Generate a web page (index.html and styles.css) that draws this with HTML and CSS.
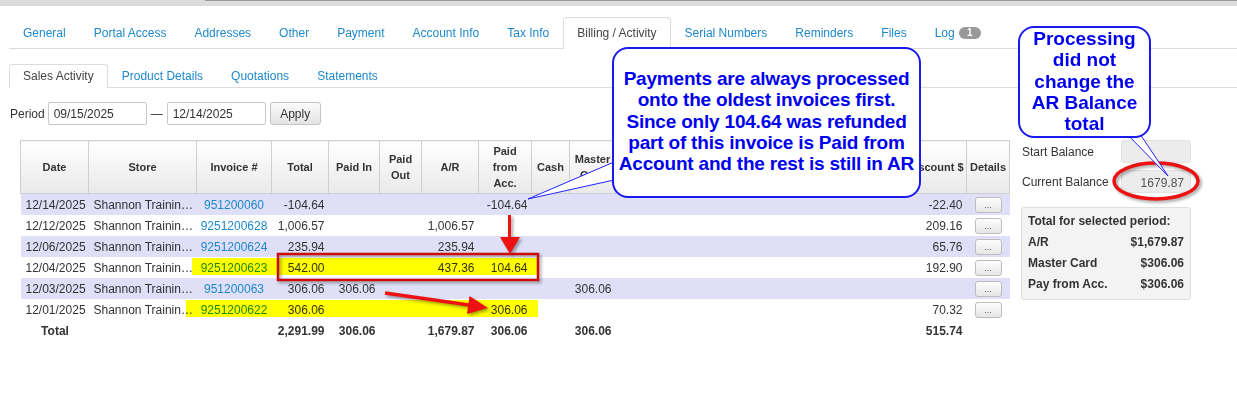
FILE: index.html
```html
<!DOCTYPE html>
<html lang="en">
<head>
    <meta charset="UTF-8">
    <title>Billing / Activity</title>
    <link rel="stylesheet" href="styles.css">
</head>
<body>
<div class="page">
    <div class="topbar"><div class="topbar-line"></div></div>

    <!-- Main customer tabs -->
    <ul class="tabs">
        <li><a href="#">General</a></li>
        <li><a href="#">Portal Access</a></li>
        <li><a href="#">Addresses</a></li>
        <li><a href="#">Other</a></li>
        <li><a href="#">Payment</a></li>
        <li><a href="#">Account Info</a></li>
        <li><a href="#">Tax Info</a></li>
        <li class="active"><a href="#">Billing / Activity</a></li>
        <li><a href="#">Serial Numbers</a></li>
        <li><a href="#">Reminders</a></li>
        <li><a href="#">Files</a></li>
        <li><a href="#">Log <span class="badge">1</span></a></li>
    </ul>

    <ul class="tabs subtabs">
        <li class="active"><a href="#">Sales Activity</a></li>
        <li><a href="#">Product Details</a></li>
        <li><a href="#">Quotations</a></li>
        <li><a href="#">Statements</a></li>
    </ul>

    <div class="period">
        <label>Period</label>
        <input type="text" value="09/15/2025">
        <span class="dash">&mdash;</span>
        <input type="text" value="12/14/2025">
        <button class="btn">Apply</button>
    </div>

    <div class="content">
        <table class="activity">
            <colgroup>
                <col style="width:68px"><col style="width:108px"><col style="width:75px"><col style="width:57px">
                <col style="width:51px"><col style="width:42px"><col style="width:57px"><col style="width:53px">
                <col style="width:38px"><col style="width:46px"><col style="width:58px"><col style="width:58px">
                <col style="width:58px"><col style="width:58px"><col style="width:57px"><col style="width:62px">
                <col style="width:43px">
            </colgroup>
            <thead>
                <tr>
                    <th>Date</th><th>Store</th><th>Invoice #</th><th>Total</th><th>Paid In</th><th>Paid Out</th>
                    <th>A/R</th><th>Paid from Acc.</th><th>Cash</th><th>Master Card</th><th></th><th></th>
                    <th></th><th></th><th></th><th>Discount $</th><th>Details</th>
                </tr>
            </thead>
            <tbody>
                <tr>
                    <td>12/14/2025</td><td class="store">Shannon Training Store</td><td class="inv"><a href="#">951200060</a></td>
                    <td class="num">-104.64</td><td></td><td></td><td></td><td class="num">-104.64</td><td></td><td></td>
                    <td></td><td></td><td></td><td></td><td></td><td class="num">-22.40</td><td class="det"><button>...</button></td>
                </tr>
                <tr>
                    <td>12/12/2025</td><td class="store">Shannon Training Store</td><td class="inv"><a href="#">9251200628</a></td>
                    <td class="num">1,006.57</td><td></td><td></td><td class="num">1,006.57</td><td></td><td></td><td></td>
                    <td></td><td></td><td></td><td></td><td></td><td class="num">209.16</td><td class="det"><button>...</button></td>
                </tr>
                <tr>
                    <td>12/06/2025</td><td class="store">Shannon Training Store</td><td class="inv"><a href="#">9251200624</a></td>
                    <td class="num">235.94</td><td></td><td></td><td class="num">235.94</td><td></td><td></td><td></td>
                    <td></td><td></td><td></td><td></td><td></td><td class="num">65.76</td><td class="det"><button>...</button></td>
                </tr>
                <tr>
                    <td>12/04/2025</td><td class="store">Shannon Training Store</td><td class="inv"><a href="#">9251200623</a></td>
                    <td class="num">542.00</td><td></td><td></td><td class="num">437.36</td><td class="num">104.64</td><td></td><td></td>
                    <td></td><td></td><td></td><td></td><td></td><td class="num">192.90</td><td class="det"><button>...</button></td>
                </tr>
                <tr>
                    <td>12/03/2025</td><td class="store">Shannon Training Store</td><td class="inv"><a href="#">951200063</a></td>
                    <td class="num">306.06</td><td class="num">306.06</td><td></td><td></td><td></td><td></td><td class="num">306.06</td>
                    <td></td><td></td><td></td><td></td><td></td><td></td><td class="det"><button>...</button></td>
                </tr>
                <tr>
                    <td>12/01/2025</td><td class="store">Shannon Training Store</td><td class="inv"><a href="#">9251200622</a></td>
                    <td class="num">306.06</td><td></td><td></td><td></td><td class="num">306.06</td><td></td><td></td>
                    <td></td><td></td><td></td><td></td><td></td><td class="num">70.32</td><td class="det"><button>...</button></td>
                </tr>
            </tbody>
            <tfoot>
                <tr>
                    <td class="label">Total</td><td></td><td></td><td class="num">2,291.99</td><td class="num">306.06</td><td></td>
                    <td class="num">1,679.87</td><td class="num">306.06</td><td></td><td class="num">306.06</td>
                    <td></td><td></td><td></td><td></td><td></td><td class="num">515.74</td><td></td>
                </tr>
            </tfoot>
        </table>

        <aside class="balance">
            <div class="balance-row">
                <span>Start Balance</span>
                <div class="field"></div>
            </div>
            <div class="balance-row">
                <span>Current Balance</span>
                <div class="field">1679.87</div>
            </div>
            <div class="summary">
                <div class="summary-title">Total for selected period:</div>
                <div class="summary-row"><span>A/R</span><span>$1,679.87</span></div>
                <div class="summary-row"><span>Master Card</span><span>$306.06</span></div>
                <div class="summary-row"><span>Pay from Acc.</span><span>$306.06</span></div>
            </div>
        </aside>
    </div>

    <!-- highlighter marks (multiplied over the table) -->
    <svg class="overlay highlight" width="1237" height="397">
        <rect x="192" y="258" width="346" height="17" fill="#ffff00"/>
        <rect x="186" y="300" width="352" height="17" fill="#ffff00"/>
    </svg>

    <!-- annotation shapes -->
    <svg class="overlay marks" width="1237" height="397">
        <g class="red">
            <rect x="278" y="254" width="260" height="26" fill="none" stroke="#cc0a0a" stroke-width="2.5"/>
            <line x1="509.5" y1="215" x2="509.5" y2="239" stroke="#ee1111" stroke-width="3"/>
            <polygon points="500,237 520,237 510,254" fill="#ee1111"/>
            <line x1="385" y1="293" x2="469" y2="305" stroke="#ee1111" stroke-width="3.5"/>
            <polygon points="467,314 469.5,296 488,308" fill="#ee1111"/>
            <ellipse cx="1156" cy="181" rx="42" ry="18" fill="none" stroke="#ee1111" stroke-width="3.5"/>
        </g>
        <polygon points="614,162 614,180 528,199" fill="#fff" stroke="#2222ff" stroke-width="1"/>
        <polygon points="1127,134 1140,134 1168,176" fill="#fff" stroke="#2222ff" stroke-width="1"/>
    </svg>

    <div class="callout callout-main">
        Payments are always processed<br>
        onto the oldest invoices first.<br>
        Since only 104.64 was refunded<br>
        part of this invoice is Paid from<br>
        Account and the rest is still in AR
    </div>
    <div class="callout callout-side">
        Processing<br>did not<br>change the<br>AR Balance<br>total
    </div>
</div>
</body>
</html>
```

FILE: styles.css
```css
/* page */
body {
    margin: 0;
    font-family: "Liberation Sans", Arial, sans-serif;
    font-size: 12px;
    color: #333;
    background: #fff;
}

.page {
    position: relative;
    width: 1237px;
    height: 397px;
    overflow: hidden;
}

.topbar {
    height: 6px;
    background: #dcdcdc;
}

.topbar-line {
    margin-left: 205px;
    height: 1px;
    background: #9a9a9a;
}

/* tabs */
.tabs {
    display: flex;
    list-style: none;
    margin: 11px 0 0 9px;
    padding: 0;
    border-bottom: 1px solid #dcdcdc;
}

.tabs li {
    margin-bottom: -1px;
}

.tabs a {
    display: block;
    padding: 0 13px;
    line-height: 30px;
    border: 1px solid transparent;
    border-bottom: 0;
    border-radius: 4px 4px 0 0;
    color: #1e88cc;
    text-decoration: none;
}

.tabs li.active a {
    color: #444;
    background: #fff;
    border-color: #dcdcdc;
    padding-bottom: 1px;
}

.badge {
    display: inline-block;
    margin-left: 1px;
    padding: 0 8px;
    line-height: 12px;
    border-radius: 6px;
    background: #999;
    color: #fff;
    font-size: 10px;
    font-weight: bold;
    vertical-align: 1px;
}

.subtabs {
    margin-top: 15px;
    margin-left: 9px;
}

.subtabs a {
    line-height: 22px;
    padding: 0 13px;
}

/* period filter */
.period {
    display: flex;
    align-items: center;
    margin: 14px 0 0 10px;
    height: 23px;
}

.period label {
    margin-right: 3px;
}

.period input {
    box-sizing: border-box;
    width: 99px;
    height: 23px;
    padding: 0 5px;
    border: 1px solid #c8c8c8;
    border-radius: 2px;
    font-family: inherit;
    font-size: 12px;
    color: #333;
}

.dash {
    margin: 0 4px;
}

.btn {
    margin-left: 4px;
    height: 23px;
    width: 51px;
    border: 1px solid #c4c4c4;
    border-radius: 3px;
    background: linear-gradient(#fbfbfb, #e4e4e4);
    font-family: inherit;
    font-size: 12px;
    color: #333;
}

/* activity table */
.content {
    display: flex;
    align-items: flex-start;
    margin: 15px 0 0 20px;
}

.activity {
    width: 989px;
    table-layout: fixed;
    border-collapse: collapse;
    font-size: 12px;
}

.activity th {
    height: 52px;
    padding: 0 2px;
    border: 1px solid #cfcfcf;
    background: linear-gradient(#ffffff, #e9e9e9);
    font-size: 11px;
    line-height: 16px;
    font-weight: bold;
    color: #333;
    overflow: hidden;
}

.activity td {
    height: 21px;
    padding: 0 4px 0 5px;
    white-space: nowrap;
}

.activity td.store {
    overflow: hidden;
    text-overflow: ellipsis;
    padding-right: 3px;
}

.activity tbody tr:nth-child(odd) td {
    background: #dfdff7;
}

.activity .num {
    text-align: right;
}

.activity .inv {
    padding: 0;
    text-align: center;
}

.activity .inv a {
    color: #1e88cc;
    text-decoration: none;
}

.activity .det {
    padding: 0;
    text-align: center;
}

.activity .det button {
    width: 27px;
    height: 16px;
    padding: 0;
    border: 1px solid #bdbdbd;
    border-radius: 3px;
    background: linear-gradient(#fdfdfd, #e6e6e6);
    font-size: 9px;
    line-height: 10px;
    color: #555;
    vertical-align: middle;
}

.activity tfoot td {
    font-weight: bold;
}

.activity tfoot .label {
    text-align: center;
}

/* balance panel */
.balance {
    width: 170px;
    margin-left: 11px;
}

.balance-row {
    display: flex;
    justify-content: space-between;
    align-items: center;
    margin-bottom: 7px;
}

.balance-row span {
    padding-left: 1px;
}

.field {
    box-sizing: border-box;
    width: 70px;
    height: 23px;
    padding: 0 6px;
    border: 1px solid #e2e2e2;
    border-radius: 3px;
    background: #ececec;
    text-align: right;
    line-height: 24px;
    color: #555;
}

.summary {
    margin-top: 14px;
    padding: 3px 6px 4px;
    border: 1px solid #e0e0e0;
    border-radius: 3px;
    background: #f3f3f3;
    font-weight: bold;
    line-height: 21px;
}

.summary-row {
    display: flex;
    justify-content: space-between;
}

/* annotations */
.overlay {
    position: absolute;
    top: 0;
    left: 0;
    pointer-events: none;
}

.highlight {
    mix-blend-mode: multiply;
}

.marks .red {
    filter: drop-shadow(2px 2px 1.5px rgba(0, 0, 0, 0.35));
}

.callout {
    position: absolute;
    box-sizing: border-box;
    border: 2px solid #1a1aee;
    border-radius: 16px;
    background: #fff;
    color: #0000ee;
    font-weight: bold;
    font-size: 19px;
    line-height: 21.3px;
    text-align: center;
}

.callout-main {
    left: 612px;
    top: 47px;
    width: 309px;
    height: 151px;
    padding-top: 19px;
    letter-spacing: -0.2px;
}

.callout-side {
    left: 1018px;
    top: 26px;
    width: 133px;
    height: 112px;
    padding-top: 0;
}
```
